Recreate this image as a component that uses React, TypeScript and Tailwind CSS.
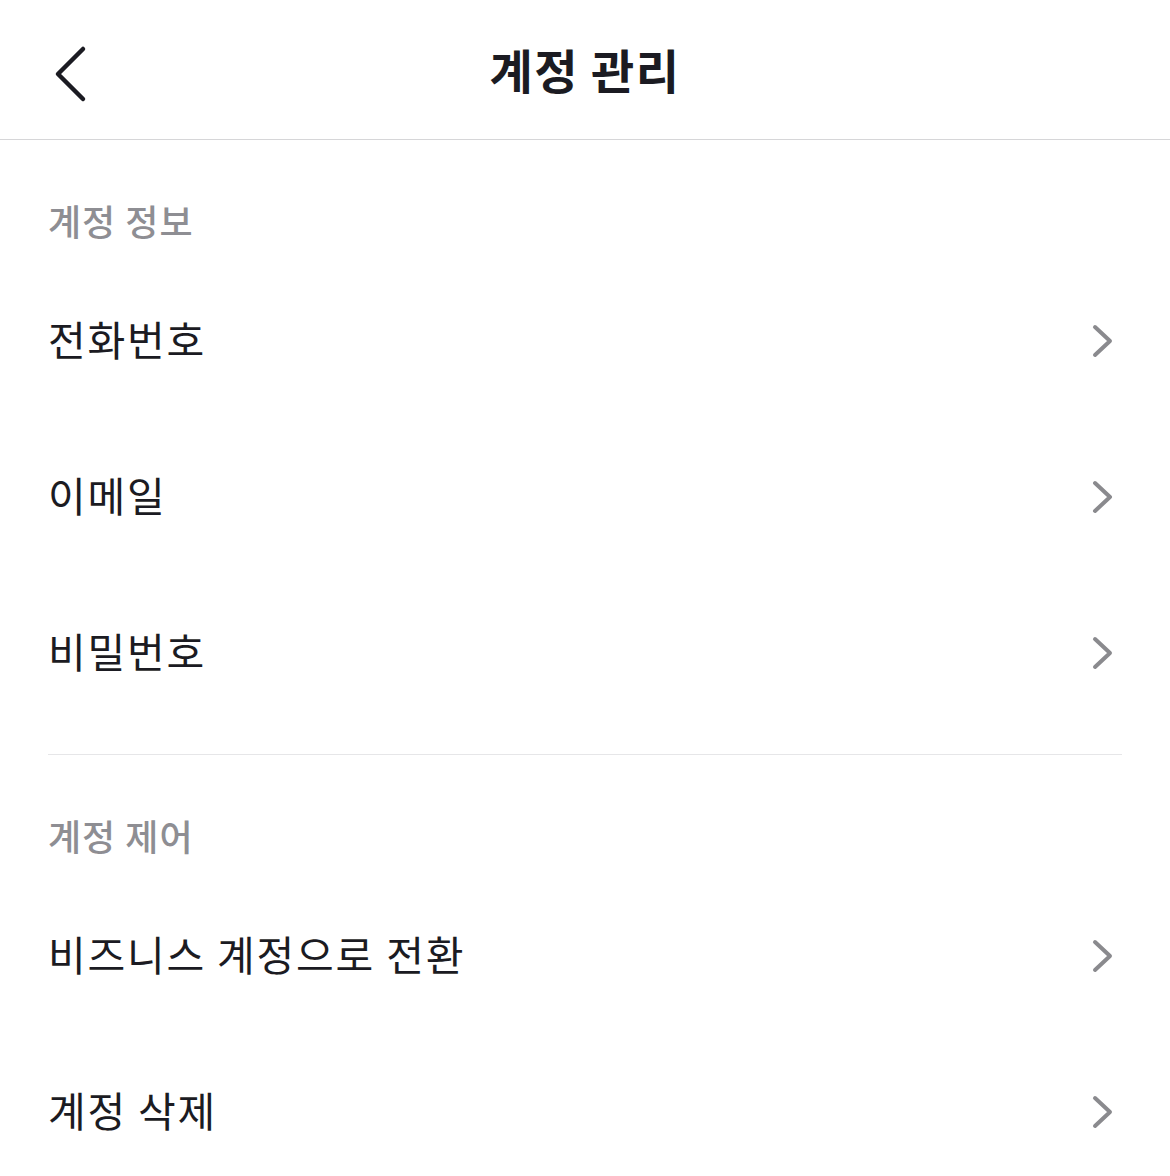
import React from 'react'

const sections = [
    { title: '계정 정보', items: ['전화번호', '이메일', '비밀번호'] },
    { title: '계정 제어', items: ['비즈니스 계정으로 전환', '계정 삭제'] },
]

function ChevronRight() {
    return (
        <svg width="24" height="38" viewBox="0 0 24 38" fill="none" className="shrink-0 mt-[5px]">
            <polyline points="4,5 19,19 4,33" stroke="#8a8a8e" strokeWidth="4" strokeLinecap="round" strokeLinejoin="round" />
        </svg>
    )
}

export default function App() {
    return (
        <div className="w-[1170px] min-h-[1176px] bg-white text-[#1b1b22] font-['Noto_Sans_CJK_KR','Noto_Sans',sans-serif]">
            {/* Header */}
            <header className="relative h-[140px] flex items-center justify-center border-b border-[#d6d6d8]">
                <button className="absolute left-[50px] top-[44px]">
                    <svg width="40" height="60" viewBox="0 0 40 60" fill="none">
                        <polyline points="33,5 8,30 33,55" stroke="#1b1b22" strokeWidth="4.5" strokeLinecap="round" strokeLinejoin="round" />
                    </svg>
                </button>
                <h1 className="text-[47px] leading-[48px] font-bold tracking-[1.5px] mb-[2px]">계정 관리</h1>
            </header>

            {sections.map((section, si) => (
                <section key={section.title}>
                    {si > 0 && <div className="mx-[48px] mt-[26px] h-px bg-[#e6e6e8]"></div>}
                    <div className="px-[48px] pt-[60px] pb-[20px]">
                        <h2 className="text-[36px] leading-[40px] tracking-[1px] text-[#8e8e93] font-medium">{section.title}</h2>
                    </div>
                    {section.items.map(item => (
                        <div key={item} className="h-[156px] flex items-center justify-between pl-[48px] pr-[55px]">
                            <span className="text-[41px] leading-[44px] tracking-[1.8px]">{item}</span>
                            <ChevronRight />
                        </div>
                    ))}
                </section>
            ))}
        </div>
    )
}
